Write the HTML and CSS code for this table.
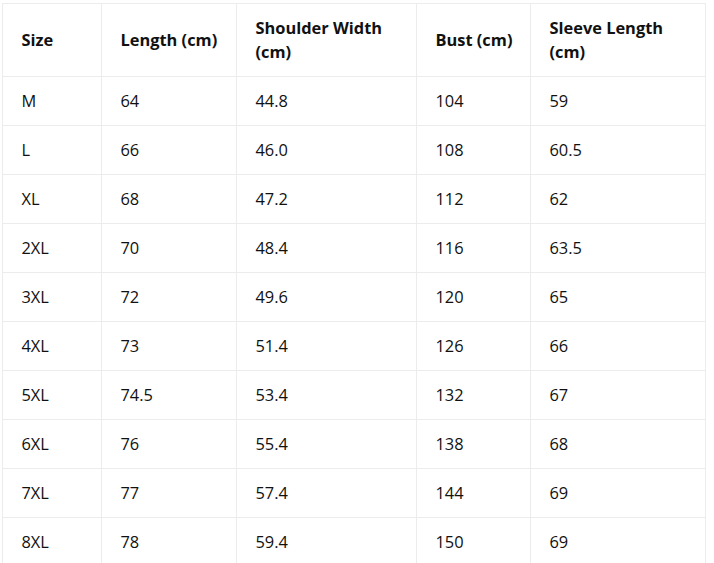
FILE: index.html
```html
<!DOCTYPE html>
<html>
<head>
<meta charset="utf-8">
<link rel="stylesheet" href="styles.css">
</head>
<body>
<table class="size-table">
  <colgroup>
    <col class="c1"><col class="c2"><col class="c3"><col class="c4"><col class="c5">
  </colgroup>
  <thead>
    <tr><th>Size</th><th>Length (cm)</th><th>Shoulder Width (cm)</th><th>Bust (cm)</th><th>Sleeve Length (cm)</th></tr>
  </thead>
  <tbody>
    <tr><td>M</td><td>64</td><td>44.8</td><td>104</td><td>59</td></tr>
    <tr><td>L</td><td>66</td><td>46.0</td><td>108</td><td>60.5</td></tr>
    <tr><td>XL</td><td>68</td><td>47.2</td><td>112</td><td>62</td></tr>
    <tr><td>2XL</td><td>70</td><td>48.4</td><td>116</td><td>63.5</td></tr>
    <tr><td>3XL</td><td>72</td><td>49.6</td><td>120</td><td>65</td></tr>
    <tr><td>4XL</td><td>73</td><td>51.4</td><td>126</td><td>66</td></tr>
    <tr><td>5XL</td><td>74.5</td><td>53.4</td><td>132</td><td>67</td></tr>
    <tr><td>6XL</td><td>76</td><td>55.4</td><td>138</td><td>68</td></tr>
    <tr><td>7XL</td><td>77</td><td>57.4</td><td>144</td><td>69</td></tr>
    <tr><td>8XL</td><td>78</td><td>59.4</td><td>150</td><td>69</td></tr>
  </tbody>
</table>
</body>
</html>
```
FILE: styles.css
```css
html, body {
  margin: 0;
  background: #ffffff;
}
body {
  padding: 3px 0 0 2px;
  font-family: "Open Sans", "Noto Sans", sans-serif;
  font-size: 16.4px;
  color: #111111;
}
.size-table {
  border-collapse: collapse;
  table-layout: fixed;
  width: 703px;
}
.c1 { width: 99px; }
.c2 { width: 135px; }
.c3 { width: 180px; }
.c4 { width: 114px; }
.c5 { width: 175px; }
.size-table th,
.size-table td {
  border: 1px solid #ececec;
  padding: 12px 8px 12px 18.5px;
  line-height: 24px;
  text-align: left;
  vertical-align: middle;
}
.size-table th {
  font-weight: 700;
  white-space: normal;
}
.size-table td {
  font-weight: 400;
}
```
